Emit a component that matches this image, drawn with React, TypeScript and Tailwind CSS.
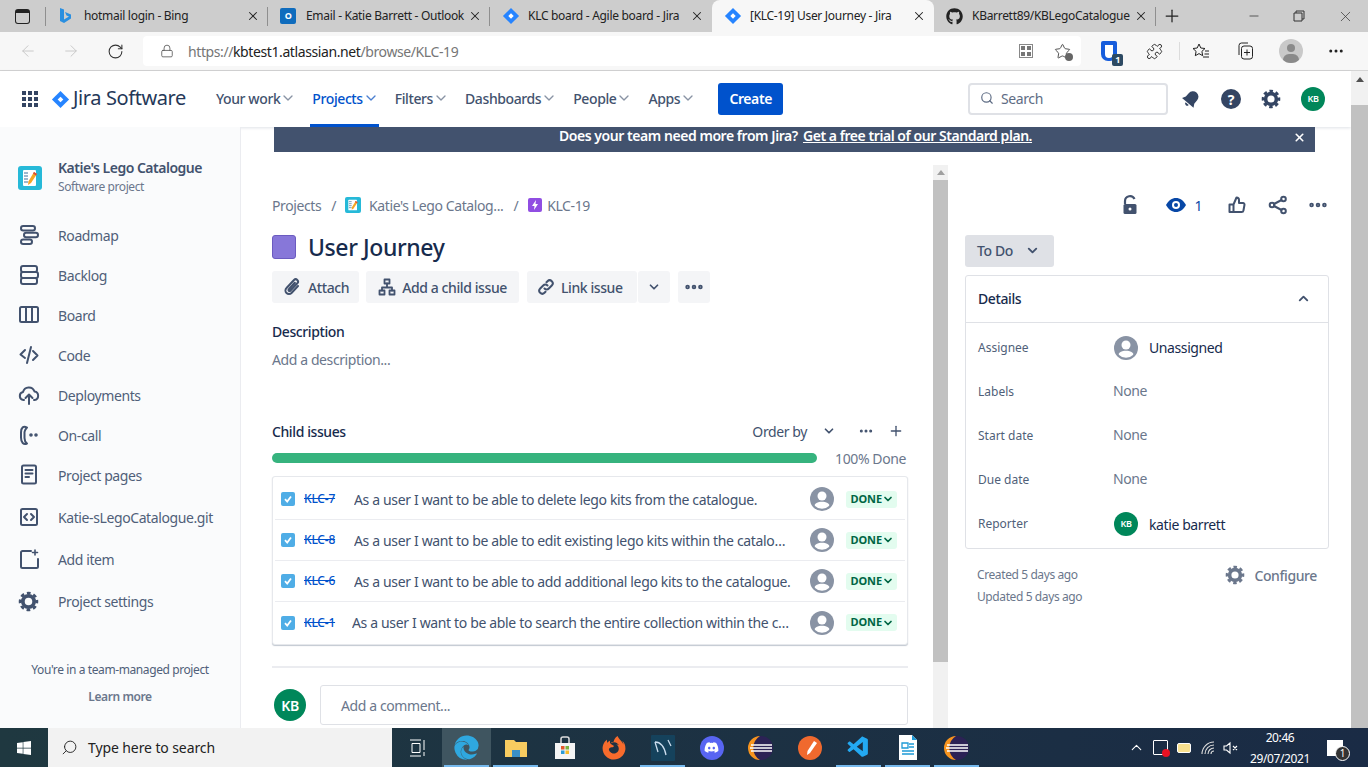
import React from 'react';
import { FaGithub, FaDiscord, FaWindows, FaFirefoxBrowser, FaEdge } from 'react-icons/fa';
import { VscVscode } from 'react-icons/vsc';
import { ArrowLeft, ArrowRight, RotateCw, Lock, Star, Search, X, Plus, Minus, ChevronDown, ChevronUp, Puzzle, MoreHorizontal } from 'lucide-react';

const JiraDiamond = ({ size = 18 }: { size?: number }) => (
  <svg width={size} height={size} viewBox="0 0 20 20">
    <path d="M10 1l9 9-9 9-9-9z" fill="#2684ff" />
    <path d="M10 7l3 3-3 3-3-3z" fill="#fff" />
  </svg>
);

const Tab = ({ icon, title, active, divider }: { icon: React.ReactNode; title: string; active?: boolean; divider?: boolean }) => (
  <div className={`relative flex h-[32px] w-[222px] shrink-0 items-center pl-[12px] pr-[8px] ${active ? 'rounded-t-lg bg-[#f7f7f7]' : ''}`}>
    <span className="flex w-[26px] shrink-0 items-center">{icon}</span>
    <span className="min-w-0 flex-1 overflow-hidden whitespace-nowrap text-[12px] tracking-[-0.3px] text-[#222]">{title}</span>
    <X size={14} strokeWidth={1.8} className="ml-[1px] shrink-0 text-[#222]" />
    {divider && <span className="absolute right-0 top-[7px] h-[19px] w-px bg-[#8f8f8f]" />}
  </div>
);

const NavItem = ({ label, active }: { label: string; active?: boolean }) => (
  <div className={`relative flex h-[56px] items-center pb-[2px] text-[14px] font-medium ${active ? 'text-[#0052cc]' : 'text-[#42526e]'}`}>
    {label}
    <ChevronDown size={16} strokeWidth={2} className={active ? 'text-[#4c7fd0]' : 'text-[#8993a4]'} />
    {active && <span className="absolute bottom-0 left-[-2px] right-0 h-[3px] bg-[#0052cc]" />}
  </div>
);

const stroke = {
  fill: 'none',
  stroke: '#42526e',
  strokeWidth: 2,
  strokeLinecap: 'round' as const,
  strokeLinejoin: 'round' as const,
};

const Gear = ({ color = '#42526e', size = 20 }: { color?: string; size?: number }) => (
  <svg width={size} height={size} viewBox="0 0 20 20" fill="none" stroke={color}>
    <circle cx="10" cy="10" r="5.4" strokeWidth="3.6" />
    <circle cx="10" cy="10" r="8" strokeWidth="2.6" strokeDasharray="3.5 2.78" strokeDashoffset="1.75" />
  </svg>
);

const sideIcons: Record<string, React.ReactNode> = {
  Roadmap: (
    <svg width="22" height="22" viewBox="0 0 22 22" {...stroke}>
      <rect x="3" y="2" width="14" height="4.5" rx="2.2" />
      <rect x="6" y="8.700" width="14" height="4.5" rx="2.2" />
      <rect x="3" y="15.500" width="11" height="4.5" rx="2.2" />
    </svg>
  ),
  Backlog: (
    <svg width="22" height="22" viewBox="0 0 22 22" {...stroke}>
      <rect x="3" y="2" width="16" height="6" rx="2" />
      <rect x="3" y="8" width="17" height="6" rx="2" />
      <rect x="3" y="14" width="16" height="6" rx="2" />
    </svg>
  ),
  Board: (
    <svg width="22" height="22" viewBox="0 0 22 22" {...stroke}>
      <rect x="2" y="3" width="18" height="15" rx="1.5" />
      <path d="M8 3v15M14 3v15" />
    </svg>
  ),
  Code: (
    <svg width="22" height="22" viewBox="0 0 22 22" {...stroke}>
      <path d="M7 6l-4.500 4.500L7 14M15 7l4.500 4.500L15 16M13 3L9 19" />
    </svg>
  ),
  Deployments: (
    <svg width="22" height="22" viewBox="0 0 22 22" {...stroke}>
      <path d="M6 16H5.500a4 4 0 01-.5-7.900 6 6 0 0111.500-.6A4.300 4.300 0 0116.500 16H16" />
      <path d="M11 20v-9M7.500 14l3.500-3.500 3.500 3.500" />
    </svg>
  ),
  'On-call': (
    <svg width="22" height="22" viewBox="0 0 22 22" {...stroke}>
      <path d="M9 3.500C5.500 1.500 3 3.500 3 8.500v5c0 5 2.500 7.500 6 6-2.500-2-2.500-3.500-2.500-5.500V8c0-1.500 1-3 2.500-4.500z" />
      <circle cx="13" cy="11" r=".8" fill="#42526e" />
      <circle cx="18" cy="11" r=".8" fill="#42526e" />
    </svg>
  ),
  'Project pages': (
    <svg width="22" height="22" viewBox="0 0 22 22" {...stroke}>
      <rect x="4" y="1.500" width="14" height="18" rx="1.5" />
      <path d="M7.500 6h7M7.500 9.500h7M7.500 13h3.500" />
    </svg>
  ),
  git: (
    <svg width="22" height="22" viewBox="0 0 22 22" {...stroke}>
      <rect x="3" y="3" width="16" height="16" rx="1.5" />
      <path d="M9 8l-3 3 3 3M13 8l3 3-3 3" />
    </svg>
  ),
  'Add item': (
    <svg width="22" height="22" viewBox="0 0 22 22" {...stroke}>
      <path d="M13 3H4.500A1.500 1.500 0 003 4.500v14A1.500 1.500 0 004.500 20h14a1.500 1.500 0 001.500-1.500V11" />
      <path d="M17 2v5M14.500 4.500h5" strokeWidth={1.6} />
    </svg>
  ),
};

const projectLogo = (size: number) => (
  <svg width={size} height={size} viewBox="0 0 24 24">
    <rect width="24" height="24" rx="3" fill="#26b9d8" />
    <rect x="5" y="4" width="13" height="16" rx="1" fill="#fff" />
    <path d="M6 7h4M6 10h4M6 13h4M6 16h4" stroke="#3f6f9c" strokeWidth="1" />
    <path d="M16 6l3 2-6 9-3 2 .4-3.500z" fill="#f5a623" />
    <path d="M16 6l3 2-1 1.500-3-2z" fill="#d9483b" />
  </svg>
);

const SideItem = ({ icon, label, mb }: { icon: React.ReactNode; label: string; mb: string }) => (
  <div className={`flex h-[22px] items-center ${mb}`}>
    <span className="flex w-[40px] shrink-0 items-center">{icon}</span>
    <span className="whitespace-nowrap text-[14px] text-[#505f79]">{label}</span>
  </div>
);

const ActionButton = ({ icon, label, px }: { icon: React.ReactNode; label: string; px: string }) => (
  <div className={`flex h-[32px] items-center gap-[6px] rounded-[3px] bg-[#f4f5f7] text-[14px] font-medium text-[#42526e] ${px}`}>
    {icon}
    {label}
  </div>
);

const Unassigned = ({ size = 26 }: { size?: number }) => (
  <svg width={size} height={size} viewBox="0 0 24 24" className="shrink-0">
    <defs>
      <clipPath id="avatarClip">
        <circle cx="12" cy="12" r="9.800" />
      </clipPath>
    </defs>
    <circle cx="12" cy="12" r="12" fill="#8993a4" />
    <circle cx="12" cy="9" r="4.5" fill="#fff" />
    <path d="M4 24v-3C4 16 8 14.800 12 14.800s8 1.200 8 6.200v3z" fill="#fff" clipPath="url(#avatarClip)" />
  </svg>
);

const KB = ({ size, text }: { size: string; text: string }) => (
  <div className={`flex shrink-0 items-center justify-center rounded-full bg-[#00875a] font-semibold text-white ${size} ${text}`}>KB</div>
);

const issues = [
  { key: 'KLC-7', text: 'As a user I want to be able to delete lego kits from the catalogue.', ml: 'ml-[18px]' },
  { key: 'KLC-8', text: 'As a user I want to be able to edit existing lego kits within the catalogue', ml: 'ml-[18px]' },
  { key: 'KLC-6', text: 'As a user I want to be able to add additional lego kits to the catalogue.', ml: 'ml-[18px]' },
  { key: 'KLC-1', text: 'As a user I want to be able to search the entire collection within the catalogue', ml: 'ml-[16px]' },
];

const IssueRow = ({ issue, last }: { issue: (typeof issues)[number]; last: boolean }) => (
  <div className={`flex h-[41px] items-center pl-[4px] pr-[8px] ${last ? '' : 'border-b border-[#ebecf0]'}`}>
    <span className="ml-[2px] flex h-[14px] w-[14px] shrink-0 items-center justify-center rounded-[2px] bg-[#4fade6]">
      <svg width="10" height="10" viewBox="0 0 10 10" fill="none" stroke="#fff" strokeWidth="1.8">
        <path d="M2 5.200l2.200 2.300L8 2.500" />
      </svg>
    </span>
    <span className="ml-[9px] w-[32px] shrink-0 whitespace-nowrap text-[12px] font-medium tracking-[-0.2px] text-[#0052cc] line-through">{issue.key}</span>
    <span className={`${issue.ml} w-[438px] shrink-0 truncate text-[14px] tracking-[-0.35px] text-[#42526e]`}>{issue.text}</span>
    <span className="ml-auto flex items-center">
      <Unassigned size={24} />
      <span className="ml-[12px] flex h-[17px] items-center rounded-[3px] bg-[#e3fcef] pl-[5px] pr-[3px] text-[11px] font-bold tracking-[-0.1px] text-[#006644]">
        DONE
        <ChevronDown size={12} strokeWidth={3.5} />
      </span>
    </span>
  </div>
);

const DetailRow = ({ label, children, mb = 'mb-[22px]' }: { label: string; children: React.ReactNode; mb?: string }) => (
  <div className={`flex h-[22px] items-center ${mb}`}>
    <span className="w-[136px] shrink-0 text-[12px] tracking-normal text-[#505f79]">{label}</span>
    {children}
  </div>
);

const TrayTile = ({ children, active, line }: { children: React.ReactNode; active?: boolean; line?: boolean }) => (
  <div className={`relative flex h-[39px] w-[49px] shrink-0 items-center justify-center ${active ? 'bg-[#3f5560]' : ''}`}>
    {children}
    {line && <span className="absolute bottom-0 left-[2px] right-[2px] h-[2px] bg-[#76b9ed]" />}
  </div>
);

const Eclipse = () => (
  <svg width="26" height="26" viewBox="0 0 26 26">
    <circle cx="13" cy="13" r="12" fill="#2c2255" />
    <path d="M12 1a12 12 0 000 24 14 14 0 010-24z" fill="#f7941e" />
    <path d="M3 10h21M2 13h22M3 16h21" stroke="#fff" strokeWidth="1.6" />
  </svg>
);

export default function App() {
  return (
    <div className="flex h-[767px] w-[1368px] flex-col overflow-hidden bg-white font-['Noto_Sans',sans-serif] tracking-[-0.4px]">
      {/* browser tabs */}
      <div className="flex h-[32px] shrink-0 items-center bg-[#cdcdcd]">
        <div className="flex w-[46px] shrink-0 items-center justify-center">
          <span className="relative left-[-1px] h-[15px] w-[15px] rounded-[3px] border-[1.5px] border-t-[4px] border-[#222]" />
        </div>
        <span className="ml-[-1px] h-[19px] w-px bg-[#8f8f8f]" />
        <Tab
          divider
          title="hotmail login - Bing"
          icon={
            <svg width="14" height="18" viewBox="0 0 14 18">
              <path d="M2 1l4 1.500v10l5-3-2.500-1L7 5l6 2.500v4L6 16l-4-2z" fill="#2a8fe0" />
            </svg>
          }
        />
        <Tab
          divider
          title="Email - Katie Barrett - Outlook"
          icon={<span className="flex h-[16px] w-[16px] items-center justify-center rounded-[2px] bg-[#0f6cbd] text-[9px] font-bold text-white">O</span>}
        />
        <Tab title="KLC board - Agile board - Jira" icon={<JiraDiamond />} />
        <Tab active title="[KLC-19] User Journey - Jira" icon={<JiraDiamond />} />
        <Tab divider title="KBarrett89/KBLegoCatalogue" icon={<FaGithub size={17} color="#222" />} />
        <Plus size={20} strokeWidth={1.5} className="ml-[6px] text-[#222]" />
        <div className="ml-auto flex items-center gap-[32px] pr-[14px] text-[#333]">
          <Minus size={14} strokeWidth={1.3} />
          <svg width="12" height="12" viewBox="0 0 12 12" fill="none" stroke="#333">
            <path d="M3 3V1h8v8H9M1 3h8v8H1z" />
          </svg>
          <X size={17} strokeWidth={1} />
        </div>
      </div>

      {/* browser toolbar */}
      <div className="flex h-[39px] shrink-0 items-center border-b border-[#d4d4d4] bg-[#f7f7f7]">
        <div className="flex w-[143px] shrink-0 items-center gap-[25px] pl-[19px]">
          <ArrowLeft size={18} strokeWidth={1.2} className="text-[#c4c4c4]" />
          <ArrowRight size={18} strokeWidth={1.2} className="text-[#c4c4c4]" />
          <RotateCw size={17} strokeWidth={1.5} className="ml-[2px] text-[#333]" />
        </div>
        <div className="flex h-[30px] w-[938px] shrink-0 items-center rounded-[4px] bg-white pl-[17px] pr-[10px]">
          <Lock size={14} strokeWidth={1.4} className="text-[#555]" />
          <span className="ml-[14px] whitespace-nowrap text-[14px] text-[#767676]">
            https://<span className="text-[#222]">kbtest1.atlassian.net</span>/browse/KLC-19
          </span>
          <span className="ml-auto mr-[21px] grid h-[14px] w-[14px] grid-cols-2 gap-[2px] border border-[#888] p-[1px]">
            <span className="bg-[#777]" />
            <span className="bg-[#777]" />
            <span className="bg-[#777]" />
            <span className="bg-[#777]" />
          </span>
          <span className="relative">
            <Star size={17} strokeWidth={1.3} className="text-[#444]" />
            <span className="absolute bottom-[-1px] right-[-2px] h-[8px] w-[8px] rounded-full bg-[#666]" />
          </span>
        </div>
        <div className="relative ml-[20px]">
          <span className="flex h-[20px] w-[16px] items-center justify-center rounded-b-[7px] rounded-t-[2px] bg-[#175ddc]">
            <span className="h-[13px] w-[8px] rounded-b-[4px] bg-white" />
          </span>
          <span className="absolute bottom-[-5px] right-[-6px] flex h-[12px] w-[11px] items-center justify-center rounded-[2px] bg-[#2d4a63] text-[9px] font-bold text-white">1</span>
        </div>
        <Puzzle size={17} strokeWidth={1.3} className="ml-[29px] text-[#222]" />
        <span className="ml-[16px] h-[18px] w-px bg-[#dcdcdc]" />
        <svg width="18" height="16" viewBox="0 0 18 16" fill="none" stroke="#222" className="ml-[12px]">
          <path d="M7 1l1.800 4 4.200.5-3.100 2.900.8 4.300L7 10.600l-3.700 2.100.8-4.300L1 5.500 5.200 5z" />
          <path d="M13 8h4M12.500 11h4.500M11 14h6" />
        </svg>
        <svg width="18" height="18" viewBox="0 0 18 18" fill="none" stroke="#222" className="ml-[26px]">
          <path d="M3 13V3.500A2.500 2.500 0 015.500 1H12" />
          <rect x="5.500" y="4" width="11" height="13" rx="2.500" />
          <path d="M11 7.500v6M8 10.500h6" />
        </svg>
        <span className="relative ml-[25px] h-[24px] w-[24px] overflow-hidden rounded-full bg-[#c9c9c9]">
          <span className="absolute left-[8px] top-[5px] h-[8px] w-[8px] rounded-full bg-[#8a8a8a]" />
          <span className="absolute left-[4px] top-[15px] h-[12px] w-[16px] rounded-full bg-[#8a8a8a]" />
        </span>
        <MoreHorizontal size={18} className="ml-[24px] text-[#222]" />
      </div>

      <div className="flex min-h-0 flex-1">
        <div className="flex min-w-0 flex-1 flex-col">
          {/* jira nav */}
          <header className="flex h-[56px] shrink-0 items-center bg-white pl-[22px] pr-[26px] shadow-[0_1px_3px_rgba(9,30,66,0.13)]">
            <div className="grid h-[16px] w-[16px] grid-cols-3 gap-[2px]">
              {[...Array(9)].map((_, i) => (
                <span key={i} className="bg-[#344563]" />
              ))}
            </div>
            <span className="ml-[13px]">
              <JiraDiamond size={19} />
            </span>
            <span className="ml-[3px] pb-[2px] text-[20px] text-[#253858]">Jira Software</span>
            <nav className="ml-[30px] flex gap-[16px]">
              <NavItem label="Your work" />
              <NavItem label="Projects" active />
              <NavItem label="Filters" />
              <NavItem label="Dashboards" />
              <NavItem label="People" />
              <NavItem label="Apps" />
            </nav>
            <div className="ml-[22px] flex h-[32px] w-[65px] items-center justify-center rounded-[3px] bg-[#0052cc] pb-[2px] text-[14px] font-semibold text-white">Create</div>
            <div className="ml-auto flex h-[32px] w-[200px] items-center rounded-[4px] border-2 border-[#dfe1e6] bg-white pb-[2px] pl-[10px] text-[14px] text-[#5e6c84]">
              <Search size={14} strokeWidth={2} className="mr-[7px]" />
              Search
            </div>
            <svg width="20" height="20" viewBox="0 0 20 20" className="ml-[13px]">
              <g transform="rotate(40 10 10)">
                <path d="M10 1.500a5.500 5.500 0 00-5.500 5.500v4.500L2.500 15h15l-2-3.500V7A5.500 5.500 0 0010 1.500z" fill="#344563" />
                <path d="M8 16h4a2 2 0 01-4 0z" fill="#344563" />
              </g>
            </svg>
            <span className="ml-[20px] flex h-[20px] w-[20px] items-center justify-center rounded-full bg-[#344563] text-[14px] font-bold text-white">?</span>
            <span className="ml-[20px]">
              <Gear color="#344563" />
            </span>
            <KB size="ml-[20px] h-[24px] w-[24px]" text="text-[9px]" />
          </header>

          <div className="flex min-h-0 flex-1">
            {/* project sidebar */}
            <aside className="flex w-[241px] shrink-0 flex-col border-r border-[#ebecf0] bg-[#fafbfc] pl-[18px] pt-[33px]">
              <div className="flex items-center">
                <span className="mr-[16px]">{projectLogo(24)}</span>
                <div className="mt-[-2px]">
                  <div className="whitespace-nowrap text-[14px] font-semibold leading-[20px] tracking-[-0.5px] text-[#42526e]">Katie's Lego Catalogue</div>
                  <div className="text-[12px] leading-[18px] text-[#6b778c]">Software project</div>
                </div>
              </div>
              <div className="mt-[28px] flex flex-col">
                <SideItem icon={sideIcons.Roadmap} label="Roadmap" mb="mb-[18px]" />
                <SideItem icon={sideIcons.Backlog} label="Backlog" mb="mb-[18px]" />
                <SideItem icon={sideIcons.Board} label="Board" mb="mb-[18px]" />
                <SideItem icon={sideIcons.Code} label="Code" mb="mb-[18px]" />
                <SideItem icon={sideIcons.Deployments} label="Deployments" mb="mb-[18px]" />
                <SideItem icon={sideIcons['On-call']} label="On-call" mb="mb-[18px]" />
                <SideItem icon={sideIcons['Project pages']} label="Project pages" mb="mb-[20px]" />
                <SideItem icon={sideIcons.git} label="Katie-sLegoCatalogue.git" mb="mb-[20px]" />
                <SideItem icon={sideIcons['Add item']} label="Add item" mb="mb-[20px]" />
                <SideItem icon={<Gear size={21} />} label="Project settings" mb="mb-0" />
              </div>
              <div className="ml-[-18px] mt-[49px] text-center text-[12px] text-[#505f79]">You're in a team-managed project</div>
              <div className="ml-[-18px] mt-[9px] text-center text-[12px] font-semibold text-[#6b778c]">Learn more</div>
            </aside>

            <main className="flex min-w-0 flex-1 flex-col">
              <div className="ml-[33px] mr-[36px] flex h-[25px] shrink-0 items-center bg-[#42526e] pb-[8px] text-[14px] font-semibold tracking-[-0.45px] text-white">
                <span className="flex-1 pl-[24px] text-center">
                  Does your team need more from Jira? <span className="ml-[2px] underline">Get a free trial of our Standard plan.</span>
                </span>
                <X size={13} strokeWidth={3} className="mr-[9px] mt-[4px]" />
              </div>

              <div className="flex min-h-0 flex-1">
                {/* issue column */}
                <section className="ml-[31px] w-[636px] shrink-0 pt-[43px]">
                  <div className="flex h-[20px] items-center text-[14px] text-[#6b778c]">
                    Projects
                    <span className="ml-[10px] mr-[9px]">/</span>
                    {projectLogo(16)}
                    <span className="ml-[8px]">Katie's Lego Catalog...</span>
                    <span className="mx-[10px]">/</span>
                    <span className="flex h-[14px] w-[14px] items-center justify-center rounded-[2px] bg-[#904ee2]">
                      <svg width="8" height="10" viewBox="0 0 8 10">
                        <path d="M5 0L1 6h2.500L3 10l4-6H4.500z" fill="#fff" />
                      </svg>
                    </span>
                    <span className="ml-[5px]">KLC-19</span>
                  </div>
                  <div className="mt-[16px] flex h-[32px] items-center">
                    <span className="h-[24px] w-[24px] rounded-[3px] border border-[#6b5bc0] bg-[#8777d9]" />
                    <h1 className="ml-[12px] text-[23px] font-medium text-[#172b4d]">User Journey</h1>
                  </div>
                  <div className="mt-[8px] flex items-center">
                    <ActionButton
                      px="px-[10px]"
                      label="Attach"
                      icon={
                        <svg width="20" height="20" viewBox="0 0 20 20" {...stroke}>
                          <path d="M16 9l-6.500 7a3.500 3.500 0 01-5-5l7.500-8a2.300 2.300 0 013.300 3.300l-7 7.500a1 1 0 01-1.500-1.500l6-6.500" />
                        </svg>
                      }
                    />
                    <span className="w-[7px]" />
                    <ActionButton
                      px="px-[12px]"
                      label="Add a child issue"
                      icon={
                        <svg width="18" height="18" viewBox="0 0 18 18" {...stroke} strokeWidth={1.8}>
                          <rect x="6.500" y="1.500" width="5" height="4" />
                          <rect x="1.500" y="12.500" width="5" height="4" />
                          <rect x="11.500" y="12.500" width="5" height="4" />
                          <path d="M9 5.500v4M4 12.500v-3h10v3" />
                        </svg>
                      }
                    />
                    <span className="w-[8px]" />
                    <ActionButton
                      px="pl-[10px] pr-[14px]"
                      label="Link issue"
                      icon={
                        <svg width="18" height="18" viewBox="0 0 18 18" {...stroke}>
                          <path d="M7.500 10.500a3 3 0 004.300 0l3-3a3 3 0 00-4.300-4.300L9.500 4.200" />
                          <path d="M10.500 7.500a3 3 0 00-4.300 0l-3 3a3 3 0 004.300 4.300l1-1" />
                        </svg>
                      }
                    />
                    <span className="ml-px flex h-[32px] w-[32px] items-center justify-center rounded-[3px] bg-[#f4f5f7]">
                      <ChevronDown size={14} strokeWidth={3} className="text-[#42526e]" />
                    </span>
                    <span className="ml-[8px] flex h-[32px] w-[32px] items-center justify-center rounded-[3px] bg-[#f4f5f7]">
                      <MoreHorizontal size={22} strokeWidth={3} className="text-[#42526e]" />
                    </span>
                  </div>
                  <div className="mt-[19px] text-[14px] font-medium leading-[20px] text-[#172b4d]">Description</div>
                  <div className="mt-[8px] text-[14px] leading-[20px] text-[#6b778c]">Add a description...</div>
                  <div className="mt-[51px] flex h-[20px] items-center text-[14px] font-medium text-[#172b4d]">
                    Child issues
                    <span className="ml-auto font-normal text-[#42526e]">Order by</span>
                    <ChevronDown size={14} strokeWidth={3} className="ml-[15px] text-[#42526e]" />
                    <MoreHorizontal size={16} strokeWidth={2.5} className="ml-[22px] text-[#42526e]" />
                    <Plus size={16} strokeWidth={2} className="ml-[14px] mr-[4px] text-[#42526e]" />
                  </div>
                  <div className="mt-[10px] flex h-[14px] items-center">
                    <div className="h-[10px] w-[545px] rounded-full bg-[#36b37e]" />
                    <span className="ml-auto mr-[2px] text-[14px] text-[#6b778c]">100% Done</span>
                  </div>
                  <div className="mt-[11px] rounded-[3px] border border-[#e6e8ec] bg-white px-[2px] pb-[1px] pt-[2px] shadow-[0_1px_1px_rgba(9,30,66,0.25)]">
                    {issues.map((issue, i) => (
                      <IssueRow key={issue.key} issue={issue} last={i === issues.length - 1} />
                    ))}
                  </div>
                  <div className="mt-[21px] h-[2px] bg-[#ebecf0]" />
                  <div className="mt-[17px] flex">
                    <KB size="ml-[2px] mt-[4px] h-[32px] w-[32px]" text="text-[14px]" />
                    <div className="ml-[14px] flex h-[40px] flex-1 items-center rounded-[3px] border border-[#dfe1e6] pl-[20px] text-[14px] text-[#6b778c]">Add a comment...</div>
                  </div>
                </section>

                {/* inner scrollbar */}
                <div className="ml-[25px] mt-[13px] flex h-[563px] w-[15px] shrink-0 flex-col items-center bg-[#f1f1f1] pt-[5px]">
                  <span className="h-0 w-0 border-x-[4px] border-b-[5px] border-x-transparent border-b-[#a0a0a0]" />
                  <div className="mt-[5px] h-[482px] w-full bg-[#c1c1c1]" />
                </div>

                {/* details panel */}
                <section className="ml-[17px] w-[364px] shrink-0 pt-[43px]">
                  <div className="flex h-[20px] items-center justify-end pr-[1px] text-[#42526e]">
                    <svg width="18" height="20" viewBox="0 0 18 20">
                      <path d="M4 9V6a5 5 0 019.500-2" fill="none" stroke="#42526e" strokeWidth="2.2" />
                      <rect x="2.500" y="9" width="13" height="10" rx="1.5" fill="#42526e" />
                      <circle cx="9" cy="14" r="1.5" fill="#fff" />
                    </svg>
                    <svg width="20" height="14" viewBox="0 0 20 14" className="ml-[27px]">
                      <path d="M0 7c2.500-4.500 6-7 10-7s7.500 2.500 10 7c-2.500 4.500-6 7-10 7S2.500 11.500 0 7z" fill="#0747a6" />
                      <circle cx="10" cy="7" r="4" fill="#fff" />
                      <circle cx="10" cy="7" r="2" fill="#0747a6" />
                    </svg>
                    <span className="ml-[8px] text-[14px] text-[#0747a6]">1</span>
                    <svg width="18" height="20" viewBox="0 0 18 20" {...stroke} className="ml-[26px]">
                      <path d="M5.500 9.500l3-7c1.500 0 2.500 1 2.500 2.500v3h4a1.500 1.500 0 011.500 1.800l-1 5.500A2 2 0 0113.500 17H5.500zM1.500 9.500h4V17h-4z" />
                    </svg>
                    <svg width="20" height="20" viewBox="0 0 20 20" {...stroke} className="ml-[22px]">
                      <circle cx="4" cy="10" r="2.3" />
                      <circle cx="15.500" cy="4" r="2.3" />
                      <circle cx="15.500" cy="16" r="2.3" />
                      <path d="M6 9l7.500-4M6 11l7.500 4" />
                    </svg>
                    <MoreHorizontal size={22} strokeWidth={3} className="ml-[19px] mr-[-1px]" />
                  </div>
                  <div className="mt-[20px] flex h-[32px] w-[89px] items-center rounded-[3px] bg-[#dfe1e6] pb-[2px] pl-[12px] text-[14px] font-medium text-[#42526e]">
                    To Do
                    <ChevronDown size={15} strokeWidth={3} className="ml-[12px]" />
                  </div>
                  <div className="mt-[8px] h-[274px] rounded-[3px] border border-[#dfe1e6]">
                    <div className="flex h-[47px] items-center justify-between border-b border-[#dfe1e6] pb-[2px] pl-[12px] pr-[17px]">
                      <span className="text-[14px] font-medium text-[#172b4d]">Details</span>
                      <ChevronUp size={15} strokeWidth={3} className="text-[#42526e]" />
                    </div>
                    <div className="px-[12px] pt-[14px]">
                      <DetailRow label="Assignee">
                        <span className="flex items-center">
                          <Unassigned size={24} />
                          <span className="mb-[2px] ml-[11px] text-[14px] text-[#172b4d]">Unassigned</span>
                        </span>
                      </DetailRow>
                      <DetailRow label="Labels">
                        <span className="mb-[4px] ml-[-1px] text-[14px] text-[#6b778c]">None</span>
                      </DetailRow>
                      <DetailRow label="Start date">
                        <span className="mb-[4px] ml-[-1px] text-[14px] text-[#6b778c]">None</span>
                      </DetailRow>
                      <DetailRow label="Due date">
                        <span className="mb-[4px] ml-[-1px] text-[14px] text-[#6b778c]">None</span>
                      </DetailRow>
                      <DetailRow label="Reporter" mb="mb-0">
                        <span className="flex items-center">
                          <KB size="h-[24px] w-[24px]" text="text-[9px]" />
                          <span className="ml-[11px] text-[14px] text-[#172b4d]">katie barrett</span>
                        </span>
                      </DetailRow>
                    </div>
                  </div>
                  <div className="mt-[15px] flex justify-between px-[12px]">
                    <div className="text-[12px] leading-[22px] text-[#6b778c]">
                      <div>Created 5 days ago</div>
                      <div>Updated 5 days ago</div>
                    </div>
                    <div className="flex h-[22px] items-center gap-[9px] text-[14px] font-medium text-[#6b778c]">
                      <Gear color="#6b778c" />
                      Configure
                    </div>
                  </div>
                </section>
              </div>
            </main>
          </div>
        </div>

        {/* page scrollbar */}
        <div className="flex w-[17px] shrink-0 flex-col items-center bg-[#f1f1f1]">
          <span className="mt-[6px] h-0 w-0 border-x-[4px] border-b-[5px] border-x-transparent border-b-[#505050]" />
          <span className="mt-[23px] h-[624px] w-full bg-[#c1c1c1]" />
        </div>
      </div>

      {/* windows taskbar */}
      <footer className="flex h-[39px] shrink-0 items-center bg-linear-to-r from-[#1f3840] to-[#1a2b45] text-white">
        <div className="flex h-full w-[48px] shrink-0 items-center justify-center">
          <FaWindows size={16} />
        </div>
        <div className="flex h-full w-[344px] shrink-0 items-center bg-[#f2f2f2] pl-[13px] text-[14px] tracking-[-0.1px] text-[#222]">
          <Search size={17} strokeWidth={1.3} className="mr-[10px] -scale-x-100" />
          Type here to search
        </div>
        <div className="ml-[1px] flex">
          <TrayTile>
            <svg width="18" height="18" viewBox="0 0 18 18" fill="none" stroke="#fff">
              <path d="M1 1h11M1 17h11M3 4.500h8v9H3zM15 1v10M15 13v4" />
            </svg>
          </TrayTile>
          <TrayTile active line>
            <FaEdge size={25} color="#2fa8e0" />
          </TrayTile>
          <TrayTile line>
            <svg width="24" height="20" viewBox="0 0 24 20">
              <path d="M1 2h9l2 2h11v15H1z" fill="#f8cc60" />
              <path d="M8 12h8v7H8z" fill="#3a8fc7" />
            </svg>
          </TrayTile>
          <TrayTile>
            <svg width="22" height="24" viewBox="0 0 22 24">
              <path d="M1 7h20v16H1z" fill="#f4f4f4" />
              <path d="M7 7V3a2 2 0 012-2h4a2 2 0 012 2v4" fill="none" stroke="#ddd" strokeWidth="1.5" />
              <path d="M7 10h3.500v3.500H7z" fill="#e3572b" />
              <path d="M11.500 10H15v3.500h-3.500z" fill="#7db33f" />
              <path d="M7 14.500h3.500V18H7z" fill="#2a9ad6" />
              <path d="M11.500 14.500H15V18h-3.500z" fill="#f5bb2a" />
            </svg>
          </TrayTile>
          <TrayTile>
            <FaFirefoxBrowser size={24} color="#f76b2c" />
          </TrayTile>
          <TrayTile line>
            <svg width="24" height="26" viewBox="0 0 24 26">
              <rect width="24" height="26" rx="1" fill="#15425c" />
              <path d="M4 7c5 0 9 3 11 13M4 7l3 10M17 5l3 6" stroke="#cde" strokeWidth="1.3" fill="none" />
            </svg>
          </TrayTile>
          <TrayTile>
            <span className="flex h-[24px] w-[24px] items-center justify-center rounded-full bg-[#5865f2]">
              <FaDiscord size={15} color="#fff" />
            </span>
          </TrayTile>
          <TrayTile>
            <Eclipse />
          </TrayTile>
          <TrayTile>
            <svg width="24" height="24" viewBox="0 0 24 24">
              <circle cx="12" cy="12" r="12" fill="#f0692e" />
              <path d="M16 5l3 2-7 10-3 2 .5-4z" fill="#fff" />
            </svg>
          </TrayTile>
          <TrayTile line>
            <VscVscode size={25} color="#23a9f2" />
          </TrayTile>
          <TrayTile line>
            <svg width="20" height="25" viewBox="0 0 20 25">
              <path d="M1 0h13l5 5v20H1z" fill="#fff" />
              <path d="M14 0l5 5h-5z" fill="#1e9ad6" />
              <path d="M4 8h6v5H4zM11 9h5M11 12h5M4 16h12M4 19h12" stroke="#1e9ad6" strokeWidth="1.3" fill="none" />
            </svg>
          </TrayTile>
          <TrayTile line>
            <Eclipse />
          </TrayTile>
        </div>
        <div className="ml-auto flex items-center pr-[25px]">
          <ChevronUp size={17} strokeWidth={1.5} />
          <span className="relative ml-[8px] h-[15px] w-[15px] rounded-[1px] border border-white">
            <span className="absolute bottom-[-3px] right-[-3px] h-[8px] w-[8px] rounded-full bg-[#e81123]" />
          </span>
          <span className="ml-[9px] h-[10px] w-[14px] rounded-[2px] border border-white bg-[#f8e08e]" />
          <svg width="16" height="14" viewBox="0 0 16 14" fill="none" stroke="#ddd" strokeWidth="1.1" className="ml-[10px]">
            <path d="M1 13A12 12 0 0113 1M4 13a9 9 0 019-9M7 13a6 6 0 016-6M10 13a3 3 0 013-3" />
          </svg>
          <svg width="16" height="14" viewBox="0 0 16 14" fill="none" stroke="#fff" strokeWidth="1.1" className="ml-[6px]">
            <path d="M1 5h2.500L7 2v10L3.500 9H1zM10 5l4 4M14 5l-4 4" />
          </svg>
          <div className="ml-[10px] w-[62px] text-center text-[12px] leading-[21px]">
            <div>20:46</div>
            <div>29/07/2021</div>
          </div>
          <span className="relative ml-[16px] h-[16px] w-[16px] bg-white">
            <span className="absolute bottom-[-5px] right-[-7px] flex h-[15px] w-[15px] items-center justify-center rounded-full border border-white bg-[#333] text-[10px]">1</span>
          </span>
        </div>
      </footer>
    </div>
  );
}
